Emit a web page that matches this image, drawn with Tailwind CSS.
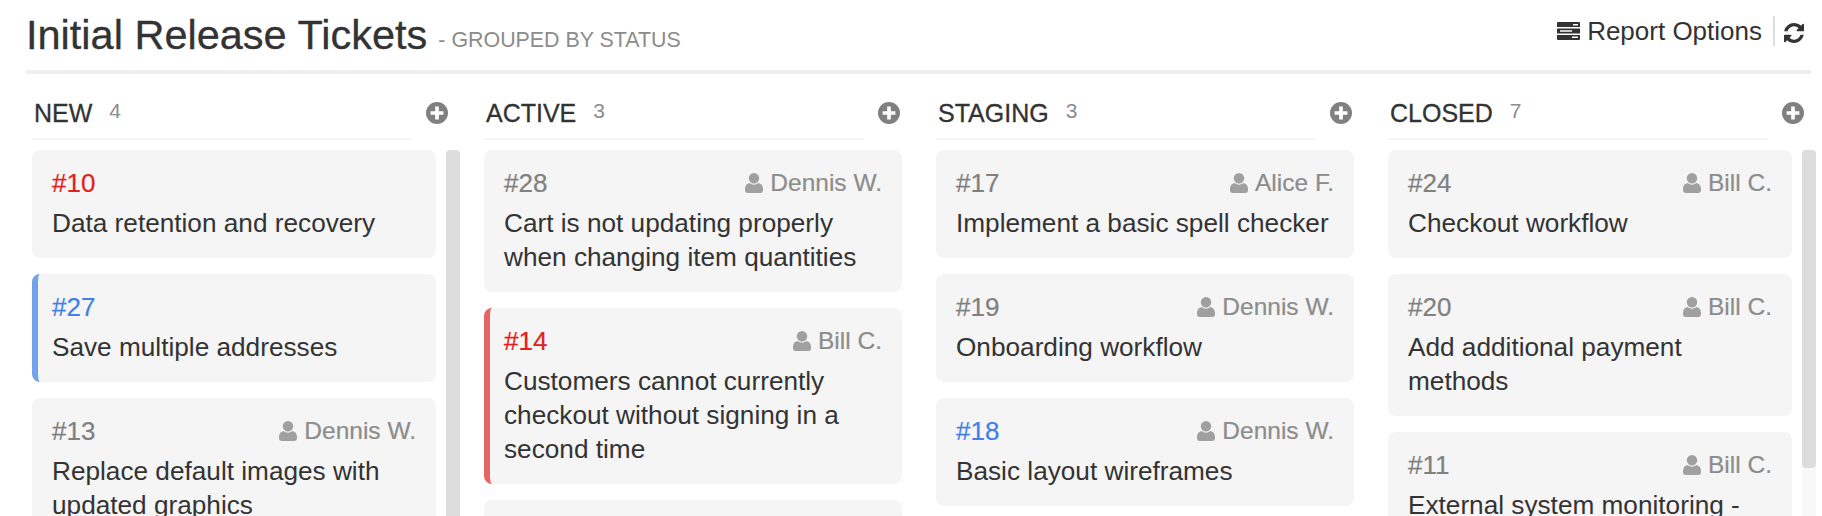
<!DOCTYPE html>
<html lang="en">
<head>
  <meta charset="UTF-8">
  <title>Initial Release Tickets</title>
  <script src="https://cdn.jsdelivr.net/npm/@tailwindcss/browser@4"></script>
</head>
<body class="bg-white h-[516px] overflow-hidden font-['Liberation_Sans',Arial,sans-serif] text-[#333]">

  <!-- page header -->
  <header class="ml-[26px] mr-[11px] h-[74px] border-b-4 border-[#eeeeee] flex justify-between">
    <div class="flex items-baseline pt-[10px]">
      <h1 class="text-[41.5px] leading-[50px] font-normal [-webkit-text-stroke:0.3px]">Initial Release Tickets</h1>
      <span class="ml-[11px] text-[21.4px] text-[#8c8c8c] -translate-y-[2px]">- GROUPED BY STATUS</span>
    </div>
    <div class="flex items-start pt-[15px] pr-[7px]">
      <svg class="w-[23px] h-[18px] mt-[7px] mr-[7px] fill-[#333]" viewBox="0 0 23 18">
        <path d="M0 1a1 1 0 0 1 1-1h21a1 1 0 0 1 1 1v4H0zM16 2v1.500h5V2zM0 6.500h23v5H0zM3 8.200v1.600h12V8.200zM0 13h23v4a1 1 0 0 1-1 1H1a1 1 0 0 1-1-1zM15 14.500V16h6v-1.500z" fill-rule="evenodd"/>
      </svg>
      <span class="text-[26px] leading-[32px]">Report Options</span>
      <div class="ml-[11px] mr-[9px] mt-[1px] w-[2px] h-[30px] bg-[#dddddd]"></div>
      <svg class="w-[20px] h-[20px] mt-[8px] fill-[#333]" viewBox="128 128 1536 1536">
        <path d="M1639 1056q0 5-1 7-64 268-268 434.5t-478 166.5q-146 0-282.5-55t-243.5-157l-129 129q-19 19-45 19t-45-19-19-45v-448q0-26 19-45t45-19h448q26 0 45 19t19 45-19 45l-137 137q71 66 161 102t187 36q134 0 250-65t186-179q11-17 53-117 8-23 30-23h192q13 0 22.5 9.5t9.5 22.5zm25-800v448q0 26-19 45t-45 19h-448q-26 0-45-19t-19-45 19-45l138-138q-148-137-349-137-134 0-250 65t-186 179q-11 17-53 117-8 23-30 23h-199q-13 0-22.5-9.5t-9.5-22.5v-7q65-268 270-434.5t480-166.5q146 0 284 55.5t245 156.5l130-129q19-19 45-19t45 19 19 45z"/>
      </svg>
    </div>
  </header>

  <!-- board -->
  <main class="ml-[32px] flex gap-[24px]">

    <section class="w-[428px] shrink-0">
      <div class="relative h-[66px] w-[380px] border-b-2 border-[#f4f4f4] flex items-start pt-[24px]">
        <h2 class="ml-[2px] text-[25px] leading-[30px] font-normal [-webkit-text-stroke:0.3px]">NEW</h2>
        <span class="ml-[17px] text-[21px] leading-[26px] text-[#8c8c8c]">4</span>
        <svg class="absolute left-[394px] top-[28px] w-[22px] h-[22px]" viewBox="0 0 24 24"><circle cx="12" cy="12" r="12" fill="#808080"/><path d="M10 5h4v5h5v4h-5v5h-4v-5H5v-4h5z" fill="#fff"/></svg>
      </div>
      <div class="mt-[10px] flex gap-[10px] items-start">
        <div class="w-[404px] flex flex-col gap-[16px]">
          <article class="bg-[#f5f5f5] rounded-[8px] px-[20px] pt-[20px] h-[108px]">
            <div class="h-[36px] text-[26px] leading-[26px] text-[#e32020] [-webkit-text-stroke:0.2px]">#10</div>
            <p class="text-[26.2px] leading-[34px]">Data retention and recovery</p>
          </article>
          <article class="bg-[#f5f5f5] rounded-[8px] border-l-[6px] border-[#72a3ea] pl-[14px] pr-[20px] pt-[20px] h-[108px]">
            <div class="h-[36px] text-[26px] leading-[26px] text-[#4080e8] [-webkit-text-stroke:0.2px]">#27</div>
            <p class="text-[26.2px] leading-[34px]">Save multiple addresses</p>
          </article>
          <article class="bg-[#f5f5f5] rounded-[8px] px-[20px] pt-[20px] h-[142px]">
            <div class="h-[36px] flex justify-between items-start text-[26px] leading-[26px] text-[#808080] [-webkit-text-stroke:0.2px]">
              <span>#13</span>
              <span class="flex items-center text-[24.5px] text-[#8c8c8c]">
                <svg class="w-[18px] h-[20px] mr-[7px] fill-[#a0a0a0]" viewBox="0 0 19 21"><circle cx="9.500" cy="5.500" r="5.500"/><path d="M0 17c0-4 2-6 5-6.500 1.300 1.200 3 1.800 4.500 1.800s3.200-.6 4.500-1.800c3 .5 5 2.500 5 6.500v1.500a2.500 2.500 0 0 1-2.500 2.500h-14a2.500 2.500 0 0 1-2.500-2.500z"/></svg>
                Dennis W.
              </span>
            </div>
            <p class="text-[26.2px] leading-[34px]">Replace default images with updated graphics</p>
          </article>
        </div>
        <div class="w-[14px] h-[400px] bg-[#dddddd] rounded-t-[4px]"></div>
      </div>
    </section>

    <section class="w-[428px] shrink-0">
      <div class="relative h-[66px] w-[380px] border-b-2 border-[#f4f4f4] flex items-start pt-[24px]">
        <h2 class="ml-[2px] text-[25px] leading-[30px] font-normal [-webkit-text-stroke:0.3px]">ACTIVE</h2>
        <span class="ml-[17px] text-[21px] leading-[26px] text-[#8c8c8c]">3</span>
        <svg class="absolute left-[394px] top-[28px] w-[22px] h-[22px]" viewBox="0 0 24 24"><circle cx="12" cy="12" r="12" fill="#808080"/><path d="M10 5h4v5h5v4h-5v5h-4v-5H5v-4h5z" fill="#fff"/></svg>
      </div>
      <div class="mt-[10px] w-[418px] flex flex-col gap-[16px]">
        <article class="bg-[#f5f5f5] rounded-[8px] px-[20px] pt-[20px] h-[142px]">
          <div class="h-[36px] flex justify-between items-start text-[26px] leading-[26px] text-[#808080] [-webkit-text-stroke:0.2px]">
            <span>#28</span>
            <span class="flex items-center text-[24.5px] text-[#8c8c8c]">
              <svg class="w-[18px] h-[20px] mr-[7px] fill-[#a0a0a0]" viewBox="0 0 19 21"><circle cx="9.500" cy="5.500" r="5.500"/><path d="M0 17c0-4 2-6 5-6.500 1.300 1.200 3 1.800 4.500 1.800s3.200-.6 4.500-1.800c3 .5 5 2.500 5 6.500v1.500a2.500 2.500 0 0 1-2.500 2.500h-14a2.500 2.500 0 0 1-2.500-2.500z"/></svg>
              Dennis W.
            </span>
          </div>
          <p class="text-[26.2px] leading-[34px]">Cart is not updating properly when changing item quantities</p>
        </article>
        <article class="bg-[#f5f5f5] rounded-[8px] border-l-[6px] border-[#e56464] pl-[14px] pr-[20px] pt-[20px] h-[176px]">
          <div class="h-[36px] flex justify-between items-start text-[26px] leading-[26px] text-[#e32020] [-webkit-text-stroke:0.2px]">
            <span>#14</span>
            <span class="flex items-center text-[24.5px] text-[#8c8c8c]">
              <svg class="w-[18px] h-[20px] mr-[7px] fill-[#a0a0a0]" viewBox="0 0 19 21"><circle cx="9.500" cy="5.500" r="5.500"/><path d="M0 17c0-4 2-6 5-6.500 1.300 1.200 3 1.800 4.500 1.800s3.200-.6 4.500-1.800c3 .5 5 2.500 5 6.500v1.500a2.500 2.500 0 0 1-2.500 2.500h-14a2.500 2.500 0 0 1-2.500-2.500z"/></svg>
              Bill C.
            </span>
          </div>
          <p class="text-[26.2px] leading-[34px]">Customers cannot currently checkout without signing in a second time</p>
        </article>
        <article class="bg-[#f5f5f5] rounded-[8px] h-[108px]"></article>
      </div>
    </section>

    <section class="w-[428px] shrink-0">
      <div class="relative h-[66px] w-[380px] border-b-2 border-[#f4f4f4] flex items-start pt-[24px]">
        <h2 class="ml-[2px] text-[25px] leading-[30px] font-normal [-webkit-text-stroke:0.3px]">STAGING</h2>
        <span class="ml-[17px] text-[21px] leading-[26px] text-[#8c8c8c]">3</span>
        <svg class="absolute left-[394px] top-[28px] w-[22px] h-[22px]" viewBox="0 0 24 24"><circle cx="12" cy="12" r="12" fill="#808080"/><path d="M10 5h4v5h5v4h-5v5h-4v-5H5v-4h5z" fill="#fff"/></svg>
      </div>
      <div class="mt-[10px] w-[418px] flex flex-col gap-[16px]">
        <article class="bg-[#f5f5f5] rounded-[8px] px-[20px] pt-[20px] h-[108px]">
          <div class="h-[36px] flex justify-between items-start text-[26px] leading-[26px] text-[#808080] [-webkit-text-stroke:0.2px]">
            <span>#17</span>
            <span class="flex items-center text-[24.5px] text-[#8c8c8c]">
              <svg class="w-[18px] h-[20px] mr-[7px] fill-[#a0a0a0]" viewBox="0 0 19 21"><circle cx="9.500" cy="5.500" r="5.500"/><path d="M0 17c0-4 2-6 5-6.500 1.300 1.200 3 1.800 4.500 1.800s3.200-.6 4.500-1.800c3 .5 5 2.500 5 6.500v1.500a2.500 2.500 0 0 1-2.500 2.500h-14a2.500 2.500 0 0 1-2.500-2.500z"/></svg>
              Alice F.
            </span>
          </div>
          <p class="text-[26.2px] leading-[34px]">Implement a basic spell checker</p>
        </article>
        <article class="bg-[#f5f5f5] rounded-[8px] px-[20px] pt-[20px] h-[108px]">
          <div class="h-[36px] flex justify-between items-start text-[26px] leading-[26px] text-[#808080] [-webkit-text-stroke:0.2px]">
            <span>#19</span>
            <span class="flex items-center text-[24.5px] text-[#8c8c8c]">
              <svg class="w-[18px] h-[20px] mr-[7px] fill-[#a0a0a0]" viewBox="0 0 19 21"><circle cx="9.500" cy="5.500" r="5.500"/><path d="M0 17c0-4 2-6 5-6.500 1.300 1.200 3 1.800 4.500 1.800s3.200-.6 4.500-1.800c3 .5 5 2.500 5 6.500v1.500a2.500 2.500 0 0 1-2.500 2.500h-14a2.500 2.500 0 0 1-2.500-2.500z"/></svg>
              Dennis W.
            </span>
          </div>
          <p class="text-[26.2px] leading-[34px]">Onboarding workflow</p>
        </article>
        <article class="bg-[#f5f5f5] rounded-[8px] px-[20px] pt-[20px] h-[108px]">
          <div class="h-[36px] flex justify-between items-start text-[26px] leading-[26px] text-[#4080e8] [-webkit-text-stroke:0.2px]">
            <span>#18</span>
            <span class="flex items-center text-[24.5px] text-[#8c8c8c]">
              <svg class="w-[18px] h-[20px] mr-[7px] fill-[#a0a0a0]" viewBox="0 0 19 21"><circle cx="9.500" cy="5.500" r="5.500"/><path d="M0 17c0-4 2-6 5-6.500 1.300 1.200 3 1.800 4.500 1.800s3.200-.6 4.500-1.800c3 .5 5 2.500 5 6.500v1.500a2.500 2.500 0 0 1-2.500 2.500h-14a2.500 2.500 0 0 1-2.500-2.500z"/></svg>
              Dennis W.
            </span>
          </div>
          <p class="text-[26.2px] leading-[34px]">Basic layout wireframes</p>
        </article>
      </div>
    </section>

    <section class="w-[428px] shrink-0">
      <div class="relative h-[66px] w-[380px] border-b-2 border-[#f4f4f4] flex items-start pt-[24px]">
        <h2 class="ml-[2px] text-[25px] leading-[30px] font-normal [-webkit-text-stroke:0.3px]">CLOSED</h2>
        <span class="ml-[17px] text-[21px] leading-[26px] text-[#8c8c8c]">7</span>
        <svg class="absolute left-[394px] top-[28px] w-[22px] h-[22px]" viewBox="0 0 24 24"><circle cx="12" cy="12" r="12" fill="#808080"/><path d="M10 5h4v5h5v4h-5v5h-4v-5H5v-4h5z" fill="#fff"/></svg>
      </div>
      <div class="mt-[10px] flex gap-[10px] items-start">
        <div class="w-[404px] flex flex-col gap-[16px]">
          <article class="bg-[#f5f5f5] rounded-[8px] px-[20px] pt-[20px] h-[108px]">
            <div class="h-[36px] flex justify-between items-start text-[26px] leading-[26px] text-[#808080] [-webkit-text-stroke:0.2px]">
              <span>#24</span>
              <span class="flex items-center text-[24.5px] text-[#8c8c8c]">
                <svg class="w-[18px] h-[20px] mr-[7px] fill-[#a0a0a0]" viewBox="0 0 19 21"><circle cx="9.500" cy="5.500" r="5.500"/><path d="M0 17c0-4 2-6 5-6.500 1.300 1.200 3 1.800 4.500 1.800s3.200-.6 4.500-1.800c3 .5 5 2.500 5 6.500v1.500a2.500 2.500 0 0 1-2.500 2.500h-14a2.500 2.500 0 0 1-2.500-2.500z"/></svg>
                Bill C.
              </span>
            </div>
            <p class="text-[26.2px] leading-[34px]">Checkout workflow</p>
          </article>
          <article class="bg-[#f5f5f5] rounded-[8px] px-[20px] pt-[20px] h-[142px]">
            <div class="h-[36px] flex justify-between items-start text-[26px] leading-[26px] text-[#808080] [-webkit-text-stroke:0.2px]">
              <span>#20</span>
              <span class="flex items-center text-[24.5px] text-[#8c8c8c]">
                <svg class="w-[18px] h-[20px] mr-[7px] fill-[#a0a0a0]" viewBox="0 0 19 21"><circle cx="9.500" cy="5.500" r="5.500"/><path d="M0 17c0-4 2-6 5-6.500 1.300 1.200 3 1.800 4.500 1.800s3.200-.6 4.500-1.800c3 .5 5 2.500 5 6.500v1.500a2.500 2.500 0 0 1-2.500 2.500h-14a2.500 2.500 0 0 1-2.500-2.500z"/></svg>
                Bill C.
              </span>
            </div>
            <p class="text-[26.2px] leading-[34px]">Add additional payment methods</p>
          </article>
          <article class="bg-[#f5f5f5] rounded-[8px] px-[20px] pt-[20px] h-[142px]">
            <div class="h-[36px] flex justify-between items-start text-[26px] leading-[26px] text-[#808080] [-webkit-text-stroke:0.2px]">
              <span>#11</span>
              <span class="flex items-center text-[24.5px] text-[#8c8c8c]">
                <svg class="w-[18px] h-[20px] mr-[7px] fill-[#a0a0a0]" viewBox="0 0 19 21"><circle cx="9.500" cy="5.500" r="5.500"/><path d="M0 17c0-4 2-6 5-6.500 1.300 1.200 3 1.800 4.500 1.800s3.200-.6 4.500-1.800c3 .5 5 2.500 5 6.500v1.500a2.500 2.500 0 0 1-2.500 2.500h-14a2.500 2.500 0 0 1-2.500-2.500z"/></svg>
                Bill C.
              </span>
            </div>
            <p class="text-[26.2px] leading-[34px]">External system monitoring -</p>
          </article>
        </div>
        <div class="w-[14px] h-[400px] bg-[#f8f8f8] rounded-t-[4px]">
          <div class="h-[318px] bg-[#dddddd] rounded-[4px]"></div>
        </div>
      </div>
    </section>

  </main>
</body>
</html>
